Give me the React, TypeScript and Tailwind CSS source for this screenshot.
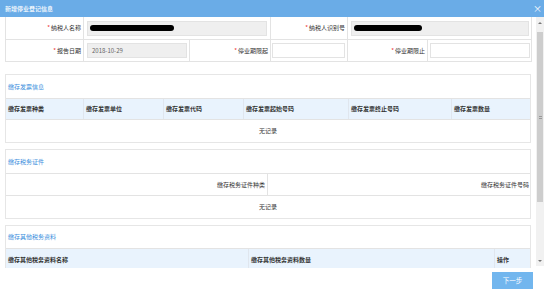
import React from "react";

const font = { fontFamily: '"Noto Sans CJK SC", "Noto Sans", sans-serif' };

function Label({ text }: { text: string }) {
  return (
    <div className="flex items-center justify-end pr-[2px] border-r border-b border-[#e3e3e3] text-[#333]">
      <span className="text-[#e33] mr-[1px]">*</span>
      <span>{text}</span>
    </div>
  );
}

function Blob({ w }: { w: number }) {
  return <div className="h-[6px] bg-black rounded-full" style={{ width: w }} />;
}

export default function App() {
  return (
    <div className="w-[544px] h-[295px] bg-white flex flex-col overflow-hidden text-[6px] leading-none" style={font}>
      {/* title bar */}
      <div className="h-[17px] shrink-0 bg-[#6aace7] flex items-center justify-between pl-[5px] pr-[2px] text-white">
        <span className="font-medium">新增停业登记信息</span>
        <span className="text-[9px] leading-none">×</span>
      </div>

      {/* scroll area */}
      <div className="h-[251px] shrink-0 flex">
        <div className="w-[536px] pl-[5px] pr-[5px] overflow-hidden">
          {/* form */}
          <div className="grid grid-cols-[78px_106px_81px_77px_80px_104px] border-l border-[#e3e3e3]">
            <div className="h-[23px] contents">
              <Label text="纳税人名称" />
              <div className="col-span-2 h-[23px] flex items-center pl-[3px] pr-[3px] border-r border-b border-[#e3e3e3]">
                <div className="w-full h-[15px] bg-[#efefef] border border-[#e3e3e3] flex items-center pl-[2px]">
                  <Blob w={84} />
                </div>
              </div>
              <Label text="纳税人识别号" />
              <div className="col-span-2 h-[23px] flex items-center pl-[3px] pr-[2px] border-r border-b border-[#e3e3e3]">
                <div className="w-full h-[15px] bg-[#efefef] border border-[#e3e3e3] flex items-center pl-[2px]">
                  <Blob w={68} />
                </div>
              </div>
            </div>
            <Label text="报告日期" />
            <div className="h-[22px] flex items-center pl-[3px] pr-[2px] border-r border-b border-[#e3e3e3]">
              <div className="w-full h-[15px] bg-[#efefef] border border-[#e3e3e3] flex items-center pl-[4px] text-[#666]">
                2018-10-29
              </div>
            </div>
            <Label text="停业期限起" />
            <div className="h-[22px] flex items-center pl-[1px] pr-[2px] border-r border-b border-[#e3e3e3]">
              <div className="w-full h-[15px] bg-white border border-[#e3e3e3]" />
            </div>
            <Label text="停业期限止" />
            <div className="h-[22px] flex items-center pl-[2px] pr-[1px] border-r border-b border-[#e3e3e3]">
              <div className="w-full h-[15px] bg-white border border-[#e3e3e3]" />
            </div>
          </div>

          {/* section 1 */}
          <div className="mt-[12px] border border-[#e6e6e6]">
            <div className="h-[23px] flex items-center pl-[2px] text-[#3b8fdd]">缴存发票信息</div>
            <div className="grid grid-cols-[78px_80px_80px_105px_103px_78px] h-[22px] bg-[#e9f3fd] border-t border-b border-[#e3e3e3] font-semibold text-[#333]">
              <div className="flex items-center pl-[2px] border-r border-[#e0e6ee]">缴存发票种类</div>
              <div className="flex items-center pl-[2px] border-r border-[#e0e6ee]">缴存发票单位</div>
              <div className="flex items-center pl-[2px] border-r border-[#e0e6ee]">缴存发票代码</div>
              <div className="flex items-center pl-[2px] border-r border-[#e0e6ee]">缴存发票起始号码</div>
              <div className="flex items-center pl-[2px] border-r border-[#e0e6ee]">缴存发票终止号码</div>
              <div className="flex items-center pl-[2px]">缴存发票数量</div>
            </div>
            <div className="h-[22px] flex items-center justify-center text-[#333]">无记录</div>
          </div>

          {/* section 2 */}
          <div className="mt-[6px] border border-[#e6e6e6]">
            <div className="h-[23px] flex items-center pl-[2px] text-[#3b8fdd]">缴存税务证件</div>
            <div className="grid grid-cols-[262px_262px] h-[23px] border-t border-b border-[#e3e3e3] text-[#333]">
              <div className="flex items-center justify-end pr-[2px] border-r border-[#e3e3e3]">缴存税务证件种类</div>
              <div className="flex items-center justify-end pr-[1px]">缴存税务证件号码</div>
            </div>
            <div className="h-[22px] flex items-center justify-center text-[#333]">无记录</div>
          </div>

          {/* section 3 */}
          <div className="mt-[6px] border border-[#e6e6e6]">
            <div className="h-[22px] flex items-center pl-[2px] text-[#3b8fdd]">缴存其他税务资料</div>
            <div className="grid grid-cols-[243px_246px_35px] h-[23px] bg-[#e9f3fd] border-t border-b border-[#e3e3e3] font-semibold text-[#333]">
              <div className="flex items-center pl-[2px] border-r border-[#e0e6ee]">缴存其他税务资料名称</div>
              <div className="flex items-center pl-[2px] border-r border-[#e0e6ee]">缴存其他税务资料数量</div>
              <div className="flex items-center pl-[2px]">操作</div>
            </div>
            <div className="h-[22px]" />
          </div>
        </div>

        {/* fake scrollbar */}
        <div className="w-[8px] h-[249px] bg-[#f1f1f1] flex flex-col items-center">
          <div className="h-[12px] flex items-center justify-center">
            <div className="w-0 h-0 border-l-[2px] border-r-[2px] border-b-[2px] border-l-transparent border-r-transparent border-b-[#777]" />
          </div>
          <div className="h-[3px]" />
          <div className="w-[6px] h-[170px] bg-[#cdcdcd] flex items-center justify-center">
            <div className="flex flex-col gap-[1px]">
              <div className="w-[3px] h-px bg-[#999]" />
              <div className="w-[3px] h-px bg-[#999]" />
            </div>
          </div>
          <div className="flex-1" />
          <div className="h-[10px] flex items-center justify-center">
            <div className="w-0 h-0 border-l-[2px] border-r-[2px] border-t-[2px] border-l-transparent border-r-transparent border-t-[#777]" />
          </div>
        </div>
      </div>

      {/* footer */}
      <div className="flex-1 flex justify-end items-start pt-[4px] pr-[11px]">
        <button className="w-[41px] h-[17px] bg-[#72b6ee] text-white text-[6.5px] flex items-center justify-center">下一步</button>
      </div>
    </div>
  );
}
